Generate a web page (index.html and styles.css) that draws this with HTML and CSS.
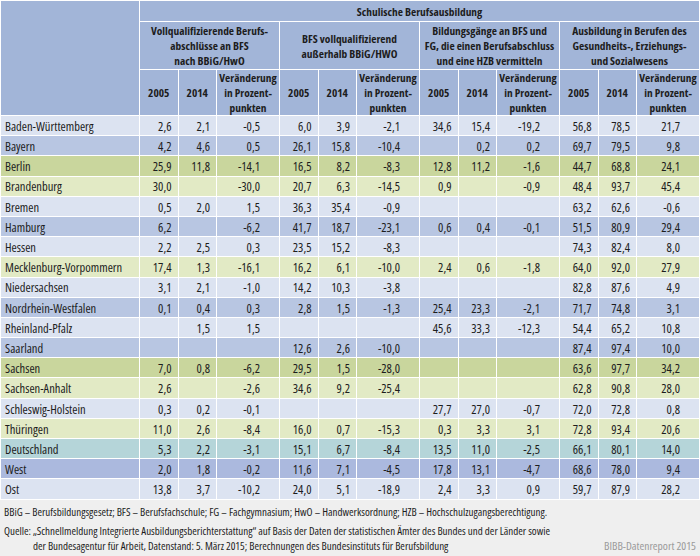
FILE: index.html
```html
<!DOCTYPE html>
<html lang="de">
<head>
<meta charset="utf-8">
<link rel="stylesheet" href="styles.css">
</head>
<body>
<div class="page">
<table class="tbl">
<colgroup>
<col class="c-land">
<col class="c-y"><col class="c-y"><col class="c-v">
<col class="c-y"><col class="c-y"><col class="c-v">
<col class="c-y"><col class="c-y"><col class="c-v">
<col class="c-y"><col class="c-y"><col class="c-v">
</colgroup>
<thead>
<tr class="h1"><th rowspan="3"></th><th colspan="12">Schulische Berufsausbildung</th></tr>
<tr class="h2">
<th colspan="3">Vollqualifizierende Berufs-<br>abschlüsse an BFS<br>nach BBiG/HwO</th>
<th colspan="3">BFS vollqualifizierend<br>außerhalb BBiG/HWO</th>
<th colspan="3">Bildungsgänge an BFS und<br>FG, die einen Berufsabschluss<br>und eine HZB vermitteln</th>
<th colspan="3">Ausbildung in Berufen des<br>Gesundheits-, Erziehungs-<br>und Sozialwesens</th>
</tr>
<tr class="h3">
<th>2005</th><th>2014</th><th>Veränderung<br>in Prozent-<br>punkten</th>
<th>2005</th><th>2014</th><th>Veränderung<br>in Prozent-<br>punkten</th>
<th>2005</th><th>2014</th><th>Veränderung<br>in Prozent-<br>punkten</th>
<th>2005</th><th>2014</th><th>Veränderung<br>in Prozent-<br>punkten</th>
</tr>
</thead>
<tbody>
<tr class="lb"><td>Baden-Württemberg</td><td>2,6</td><td>2,1</td><td>-0,5</td><td>6,0</td><td>3,9</td><td>-2,1</td><td>34,6</td><td>15,4</td><td>-19,2</td><td>56,8</td><td>78,5</td><td>21,7</td></tr>
<tr class="db"><td>Bayern</td><td>4,2</td><td>4,6</td><td>0,5</td><td>26,1</td><td>15,8</td><td>-10,4</td><td></td><td>0,2</td><td>0,2</td><td>69,7</td><td>79,5</td><td>9,8</td></tr>
<tr class="dg"><td>Berlin</td><td>25,9</td><td>11,8</td><td>-14,1</td><td>16,5</td><td>8,2</td><td>-8,3</td><td>12,8</td><td>11,2</td><td>-1,6</td><td>44,7</td><td>68,8</td><td>24,1</td></tr>
<tr class="lg"><td>Brandenburg</td><td>30,0</td><td></td><td>-30,0</td><td>20,7</td><td>6,3</td><td>-14,5</td><td>0,9</td><td></td><td>-0,9</td><td>48,4</td><td>93,7</td><td>45,4</td></tr>
<tr class="lb"><td>Bremen</td><td>0,5</td><td>2,0</td><td>1,5</td><td>36,3</td><td>35,4</td><td>-0,9</td><td></td><td></td><td></td><td>63,2</td><td>62,6</td><td>-0,6</td></tr>
<tr class="db"><td>Hamburg</td><td>6,2</td><td></td><td>-6,2</td><td>41,7</td><td>18,7</td><td>-23,1</td><td>0,6</td><td>0,4</td><td>-0,1</td><td>51,5</td><td>80,9</td><td>29,4</td></tr>
<tr class="lb"><td>Hessen</td><td>2,2</td><td>2,5</td><td>0,3</td><td>23,5</td><td>15,2</td><td>-8,3</td><td></td><td></td><td></td><td>74,3</td><td>82,4</td><td>8,0</td></tr>
<tr class="lg"><td>Mecklenburg-Vorpommern</td><td>17,4</td><td>1,3</td><td>-16,1</td><td>16,2</td><td>6,1</td><td>-10,0</td><td>2,4</td><td>0,6</td><td>-1,8</td><td>64,0</td><td>92,0</td><td>27,9</td></tr>
<tr class="lb"><td>Niedersachsen</td><td>3,1</td><td>2,1</td><td>-1,0</td><td>14,2</td><td>10,3</td><td>-3,8</td><td></td><td></td><td></td><td>82,8</td><td>87,6</td><td>4,9</td></tr>
<tr class="db"><td>Nordrhein-Westfalen</td><td>0,1</td><td>0,4</td><td>0,3</td><td>2,8</td><td>1,5</td><td>-1,3</td><td>25,4</td><td>23,3</td><td>-2,1</td><td>71,7</td><td>74,8</td><td>3,1</td></tr>
<tr class="lb"><td>Rheinland-Pfalz</td><td></td><td>1,5</td><td>1,5</td><td></td><td></td><td></td><td>45,6</td><td>33,3</td><td>-12,3</td><td>54,4</td><td>65,2</td><td>10,8</td></tr>
<tr class="db"><td>Saarland</td><td></td><td></td><td></td><td>12,6</td><td>2,6</td><td>-10,0</td><td></td><td></td><td></td><td>87,4</td><td>97,4</td><td>10,0</td></tr>
<tr class="dg"><td>Sachsen</td><td>7,0</td><td>0,8</td><td>-6,2</td><td>29,5</td><td>1,5</td><td>-28,0</td><td></td><td></td><td></td><td>63,6</td><td>97,7</td><td>34,2</td></tr>
<tr class="lg"><td>Sachsen-Anhalt</td><td>2,6</td><td></td><td>-2,6</td><td>34,6</td><td>9,2</td><td>-25,4</td><td></td><td></td><td></td><td>62,8</td><td>90,8</td><td>28,0</td></tr>
<tr class="lb"><td>Schleswig-Holstein</td><td>0,3</td><td>0,2</td><td>-0,1</td><td></td><td></td><td></td><td>27,7</td><td>27,0</td><td>-0,7</td><td>72,0</td><td>72,8</td><td>0,8</td></tr>
<tr class="lg"><td>Thüringen</td><td>11,0</td><td>2,6</td><td>-8,4</td><td>16,0</td><td>0,7</td><td>-15,3</td><td>0,3</td><td>3,3</td><td>3,1</td><td>72,8</td><td>93,4</td><td>20,6</td></tr>
<tr class="tl"><td>Deutschland</td><td>5,3</td><td>2,2</td><td>-3,1</td><td>15,1</td><td>6,7</td><td>-8,4</td><td>13,5</td><td>11,0</td><td>-2,5</td><td>66,1</td><td>80,1</td><td>14,0</td></tr>
<tr class="we"><td>West</td><td>2,0</td><td>1,8</td><td>-0,2</td><td>11,6</td><td>7,1</td><td>-4,5</td><td>17,8</td><td>13,1</td><td>-4,7</td><td>68,6</td><td>78,0</td><td>9,4</td></tr>
<tr class="lb"><td>Ost</td><td>13,8</td><td>3,7</td><td>-10,2</td><td>24,0</td><td>5,1</td><td>-18,9</td><td>2,4</td><td>3,3</td><td>0,9</td><td>59,7</td><td>87,9</td><td>28,2</td></tr>
</tbody>
</table>
<div class="foot">
<p class="abbr">BBiG – Berufsbildungsgesetz; BFS – Berufsfachschule; FG – Fachgymnasium; HwO – Handwerksordnung; HZB – Hochschulzugangsberechtigung.</p>
<div class="src">
<p class="quelle"><span class="ql">Quelle:</span><span class="qt">„Schnellmeldung Integrierte Ausbildungsberichterstattung“ auf Basis der Daten der statistischen Ämter des Bundes und der Länder sowie<br>der Bundesagentur für Arbeit, Datenstand: 5. März 2015; Berechnungen des Bundesinstituts für Berufsbildung</span></p>
<span class="brand">BIBB-Datenreport 2015</span>
</div>
</div>
</div>
</body>
</html>
```

FILE: styles.css
```css
html, body {
  margin: 0;
  padding: 0;
  background: #efefef;
}
body {
  font-family: "Open Sans", "Roboto", sans-serif;
  font-stretch: 75%;
  color: #1d1d1d;
}
.page {
  width: 700px;
  height: 556px;
  overflow: hidden;
}
.tbl {
  width: 700px;
  border-collapse: collapse;
  table-layout: fixed;
  font-size: 12.5px;
  font-weight: 500;
  border-top: 1px solid #fff;
}
.c-land { width: 139px; }
.c-y { width: 38.5px; }
.c-v { width: 63px; }
.tbl th, .tbl td {
  border: 1px solid #fff;
  padding: 0;
}
.tbl th {
  background: #a2b5d8;
  font-size: 11.4px;
  font-weight: 700;
  text-align: center;
  vertical-align: middle;
  line-height: 15px;
  white-space: nowrap;
}
.tbl tr.h1 th { height: 20px; }
.tbl tr.h2 th { height: 47px; }
.tbl tr.h3 th { height: 45px; }
.tbl td {
  height: 17.6px;
  padding-top: 1.6px;
  line-height: 15px;
  text-align: right;
  padding-right: 6px;
  white-space: nowrap;
}
.tbl td:first-child {
  text-align: left;
  padding-left: 4px;
  padding-right: 0;
}
.tbl td:nth-child(3n+4) { padding-right: 19px; }
.lb td { background: #dce3f1; }
.db td { background: #b8c6e2; }
.dg td { background: #c9d69d; }
.lg td { background: #e2eac5; }
.tl td { background: #b5d5d9; }
.we td { background: #abb9de; }
.foot {
  font-size: 11px;
  font-weight: 500;
  padding: 4px 4px 0 4px;
  line-height: 15px;
  white-space: nowrap;
}
.foot p { margin: 0; }
.abbr { margin-bottom: 4px !important; }
.src {
  display: flex;
  align-items: flex-end;
}
.quelle {
  display: flex;
}
.ql { flex: none; width: 29px; }
.brand {
  margin-left: auto;
  color: #9a9a9a;
  font-size: 11.5px;
  font-weight: 400;
}
```
